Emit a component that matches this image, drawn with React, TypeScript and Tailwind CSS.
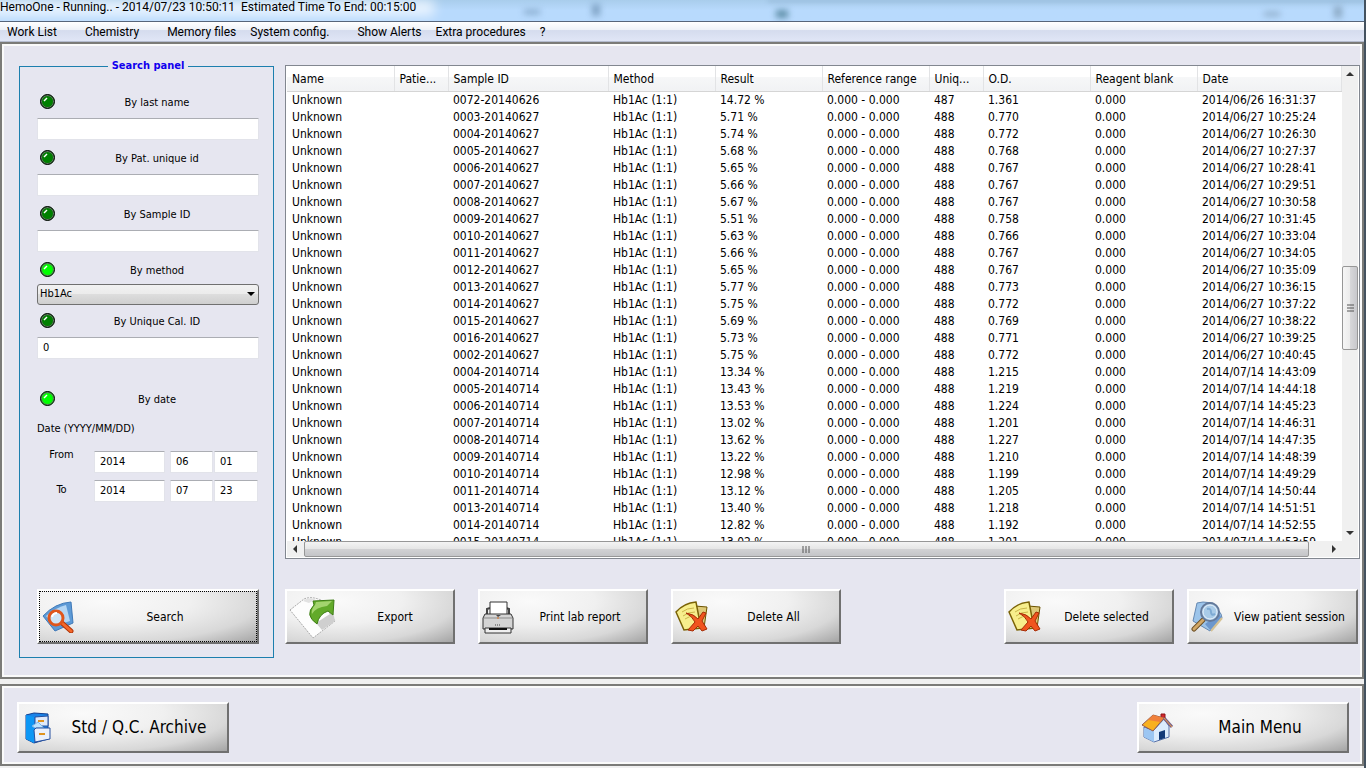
import React from "react";

interface Sample {
  id: string;
  result: string;
  cal: string;
  od: string;
  date: string;
}

const samples: Sample[] = [
  { id: "0072-20140626", result: "14.72 %", cal: "487", od: "1.361", date: "2014/06/26 16:31:37" },
  { id: "0003-20140627", result: "5.71 %", cal: "488", od: "0.770", date: "2014/06/27 10:25:24" },
  { id: "0004-20140627", result: "5.74 %", cal: "488", od: "0.772", date: "2014/06/27 10:26:30" },
  { id: "0005-20140627", result: "5.68 %", cal: "488", od: "0.768", date: "2014/06/27 10:27:37" },
  { id: "0006-20140627", result: "5.65 %", cal: "488", od: "0.767", date: "2014/06/27 10:28:41" },
  { id: "0007-20140627", result: "5.66 %", cal: "488", od: "0.767", date: "2014/06/27 10:29:51" },
  { id: "0008-20140627", result: "5.67 %", cal: "488", od: "0.767", date: "2014/06/27 10:30:58" },
  { id: "0009-20140627", result: "5.51 %", cal: "488", od: "0.758", date: "2014/06/27 10:31:45" },
  { id: "0010-20140627", result: "5.63 %", cal: "488", od: "0.766", date: "2014/06/27 10:33:04" },
  { id: "0011-20140627", result: "5.66 %", cal: "488", od: "0.767", date: "2014/06/27 10:34:05" },
  { id: "0012-20140627", result: "5.65 %", cal: "488", od: "0.767", date: "2014/06/27 10:35:09" },
  { id: "0013-20140627", result: "5.77 %", cal: "488", od: "0.773", date: "2014/06/27 10:36:15" },
  { id: "0014-20140627", result: "5.75 %", cal: "488", od: "0.772", date: "2014/06/27 10:37:22" },
  { id: "0015-20140627", result: "5.69 %", cal: "488", od: "0.769", date: "2014/06/27 10:38:22" },
  { id: "0016-20140627", result: "5.73 %", cal: "488", od: "0.771", date: "2014/06/27 10:39:25" },
  { id: "0002-20140627", result: "5.75 %", cal: "488", od: "0.772", date: "2014/06/27 10:40:45" },
  { id: "0004-20140714", result: "13.34 %", cal: "488", od: "1.215", date: "2014/07/14 14:43:09" },
  { id: "0005-20140714", result: "13.43 %", cal: "488", od: "1.219", date: "2014/07/14 14:44:18" },
  { id: "0006-20140714", result: "13.53 %", cal: "488", od: "1.224", date: "2014/07/14 14:45:23" },
  { id: "0007-20140714", result: "13.02 %", cal: "488", od: "1.201", date: "2014/07/14 14:46:31" },
  { id: "0008-20140714", result: "13.62 %", cal: "488", od: "1.227", date: "2014/07/14 14:47:35" },
  { id: "0009-20140714", result: "13.22 %", cal: "488", od: "1.210", date: "2014/07/14 14:48:39" },
  { id: "0010-20140714", result: "12.98 %", cal: "488", od: "1.199", date: "2014/07/14 14:49:29" },
  { id: "0011-20140714", result: "13.12 %", cal: "488", od: "1.205", date: "2014/07/14 14:50:44" },
  { id: "0013-20140714", result: "13.40 %", cal: "488", od: "1.218", date: "2014/07/14 14:51:51" },
  { id: "0014-20140714", result: "12.82 %", cal: "488", od: "1.192", date: "2014/07/14 14:52:55" },
  { id: "0015-20140714", result: "13.02 %", cal: "488", od: "1.201", date: "2014/07/14 14:53:59" },
];

const columns = [
  { title: "Name", width: "w-[107px]" },
  { title: "Patie...", width: "w-[54px]" },
  { title: "Sample ID", width: "w-[160px]" },
  { title: "Method", width: "w-[107px]" },
  { title: "Result", width: "w-[107px]" },
  { title: "Reference range", width: "w-[107px]" },
  { title: "Uniq...", width: "w-[54px]" },
  { title: "O.D.", width: "w-[107px]" },
  { title: "Reagent blank", width: "w-[107px]" },
  { title: "Date", width: "" },
];

const SearchIcon = () => (
  <svg width="32" height="32" viewBox="0 0 32 32">
    <path d="M1 15 Q13 2 29 1 L31 22 L13 30 Z" fill="#5d9ad6" stroke="#3f79b8" />
    <path d="M4 15 Q15 6 24 4 L28 20 L13 25 Z" fill="#b4d6f4" />
    <path d="M20 22 L29 30" stroke="#b03408" strokeWidth="5" strokeLinecap="round" />
    <path d="M20 22 L29 30" stroke="#f4682a" strokeWidth="3" strokeLinecap="round" />
    <circle cx="14" cy="17" r="7" fill="#cfe4f5" stroke="#e0561c" strokeWidth="3" />
    <path d="M10 16 Q11 12 15 12" stroke="#fff" strokeWidth="2" fill="none" />
  </svg>
);

const ExportIcon = () => (
  <svg width="48" height="44" viewBox="0 0 48 44">
    <path d="M1 15 L15 4 Q22 1 32 5 L46 26 L24 43 Z" fill="#fdfdfd" stroke="#aaa" strokeDasharray="2 1" />
    <path d="M27 28 L44 17 L46 26 L33 35 Z" fill="#cfcfcf" />
    <path d="M14 6 Q18 2 27 4 L20 8 Z" fill="#e2e2e2" />
    <path d="M28 29 Q15 20 25 10 L24 6 L45 5 L44 20 L39 16 Q30 19 28 29 Z" fill="#62aa2a" stroke="#3e7d16" />
    <path d="M26 10 L27 7 L43 6 L38 11 Q27 12 23 19 Q22 14 26 10 Z" fill="#a3d46e" />
  </svg>
);

const PrinterIcon = () => (
  <svg width="32" height="34" viewBox="0 0 32 34">
    <path d="M5 15 V9 L8 8 M27 15 V9 L24 8" stroke="#444" fill="none" strokeWidth="2" />
    <path d="M8 15 V2 H25 V15 Z" fill="#fff" stroke="#333" />
    <path d="M3 14 H29 L31 18 V29 H1 V18 Z" fill="#d4d4d4" stroke="#333" />
    <path d="M2 18 H30" stroke="#8b8b8b" />
    <path d="M3 28 H29 V33 H3 Z" fill="#efefef" stroke="#333" />
    <path d="M7 29 H25" stroke="#111" strokeWidth="2" />
    <path d="M13 25 H19" stroke="#444" strokeDasharray="1 1" />
    <path d="M14 15 H19 L16 17 Z" fill="#444" />
    <path d="M16 17 V19" stroke="#e07020" />
  </svg>
);

const DeleteIcon = () => (
  <svg width="33" height="31" viewBox="0 0 33 31">
    <path d="M20 5 L32 6 L29 27 L18 24 Z" fill="#dcc878" stroke="#6b5200" />
    <path d="M1 11 Q9 2 21 1 L26 27 L9 29 Z" fill="#f7ee8c" stroke="#7a6206" strokeWidth="1.5" />
    <path d="M7 11 Q12 7 19 7 M8 15 Q13 11 20 11 M10 18 Q14 15 20 15" stroke="#c9b64a" fill="none" />
    <path d="M11 12 Q19 13 23 18 L28 11 L31 12 L27 20 L32 28 L27 30 L23 25 L18 30 L13 29 L20 21 Q17 15 11 12 Z" fill="#f0541e" stroke="#a62c05" />
  </svg>
);

const ViewIcon = () => (
  <svg width="32" height="32" viewBox="0 0 32 32">
    <path d="M6 2 L12 1 L22 2 L30 13 L31 17 L19 30 L2 20 Z" fill="#9cc4ea" stroke="#6488b2" />
    <path d="M14 23 L28 13 L31 17 L20 30 Z" fill="#6c97cd" />
    <path d="M20 30 L31 17" stroke="#d5c295" strokeWidth="2" />
    <path d="M12 19 L3 28" stroke="#6e5126" strokeWidth="5" strokeLinecap="round" />
    <path d="M12 19 L3 28" stroke="#d2a868" strokeWidth="3" strokeLinecap="round" />
    <circle cx="19" cy="11" r="9" fill="#a9cbe8" stroke="#64799a" strokeWidth="2" />
    <circle cx="19" cy="11" r="7" fill="none" stroke="#e8f1fa" />
    <path d="M16 8 Q20 7 20 11 T24 13" stroke="#7eaad3" strokeWidth="2" fill="none" />
  </svg>
);

const CabinetIcon = () => (
  <svg width="26" height="32" viewBox="0 0 26 32">
    <path d="M1 3 L9 1 L23 2 V27 L9 31 L1 27 Z" fill="#1b83e8" stroke="#123f8f" />
    <path d="M1 3 L9 5 V31 L1 27 Z" fill="#0d97f5" />
    <path d="M10 5 L23 4 V14 H10 Z" fill="#dfe9fa" stroke="#27509f" />
    <path d="M13 9 H19" stroke="#df9320" strokeWidth="2" />
    <path d="M7 14 L13 10 L19 16 H10 Z" fill="#bfe4ff" stroke="#7eb4e6" />
    <path d="M9 18 L11 16 H25 V27 L10 30 Z" fill="#eaf0fc" stroke="#27509f" />
    <path d="M14 22 H20" stroke="#df9320" strokeWidth="2" />
  </svg>
);

const HouseIcon = () => (
  <svg width="32" height="30" viewBox="0 0 32 30">
    <path d="M20 1 H24 V9 H20 Z" fill="#d3262b" stroke="#8d1418" />
    <path d="M3 14 L12 18 L23 6 L28 13 V24 L13 29 L3 24 Z" fill="#dbebfc" stroke="#5670a8" />
    <path d="M3 15 L13 18 V29 L3 24 Z" fill="#9cc6f2" />
    <path d="M1 12 L12 2 L23 5 L12 18 Z" fill="#f8b020" stroke="#965b4c" />
    <path d="M12 2 L23 5 L19 9 L7 7 Z" fill="#f0803a" />
    <path d="M23 5 L31 14" stroke="#77608a" strokeWidth="3" />
    <path d="M23 5 L31 14" stroke="#f0a040" />
    <path d="M18 19 L24 17 V25 L18 27 Z" fill="#123a78" />
  </svg>
);

interface PushButtonProps {
  icon: React.ReactNode;
  label: string;
  size: string;
  focused?: boolean;
}

const PushButton: React.FC<PushButtonProps> = ({ icon, label, size, focused }) => (
  <button
    className={`flex shrink-0 items-center border-2 border-t-white border-l-white border-r-[#707070] border-b-[#707070] bg-[radial-gradient(ellipse_at_30%_20%,#fafafa_0%,#f0f0f0_40%,#d8d8d8_72%,#a4a4a4_100%)] ${size}`}
  >
    <span className={`flex h-full w-full items-center pl-0.5 ${focused ? "border border-dotted border-black" : ""}`}>
      {icon}
      <span className="flex-1 text-center whitespace-nowrap">{label}</span>
    </span>
  </button>
);

const Led: React.FC<{ id: string; on?: boolean }> = ({ id, on }) => (
  <span className="relative size-[15px] shrink-0">
    <input
      id={id}
      type="checkbox"
      defaultChecked={on}
      className="block size-[15px] appearance-none rounded-full border border-black bg-[#008000] shadow-[inset_0_0_0_1px_#6b6b6b] checked:bg-[#00ff00]"
    />
    <svg className="pointer-events-none absolute top-0 left-0" width="15" height="15" viewBox="0 0 15 15">
      <path d="M4 7 L7 4" stroke="#fff" strokeWidth="1.5" />
    </svg>
  </span>
);

const FilterHead: React.FC<{ id: string; label: string; on?: boolean }> = ({ id, label, on }) => (
  <div className="flex h-4 items-start pl-[3px]">
    <Led id={id} on={on} />
    <label htmlFor={id} className="flex-1 text-center leading-[18px]">{label}</label>
  </div>
);

const TextBox: React.FC<{ label: string; value?: string; width: string }> = ({ label, value = "", width }) => (
  <input
    type="text"
    aria-label={label}
    defaultValue={value}
    className={`h-[22px] min-w-0 rounded-[1px] border border-[#e2e3ea] border-t-[#abadb3] bg-white px-[5px] pb-0.5 ${width}`}
  />
);

const DateBoxes: React.FC<{ label: string; y: string; m: string; d: string }> = ({ label, y, m, d }) => (
  <div className="flex">
    <TextBox label={`${label} year`} value={y} width="w-[71px]" />
    <span className="ml-[5px] flex gap-px">
      <TextBox label={`${label} month`} value={m} width="w-[43px]" />
      <TextBox label={`${label} day`} value={d} width="w-[44px]" />
    </span>
  </div>
);

const Arrow: React.FC<{ points: string; label: string }> = ({ points, label }) => (
  <button aria-label={label} className="flex size-[17px] shrink-0 items-center justify-center">
    <svg width="9" height="9" viewBox="0 0 9 9"><polygon points={points} fill="#333" /></svg>
  </button>
);

const panel =
  "border-2 border-[#7b7b78] bg-[#e6e6f0] shadow-[inset_0_0_0_2px_#fafafa]";

const App: React.FC = () => {
  return (
    <div className="flex h-screen min-h-[700px] flex-col overflow-hidden border-r-2 border-[#44525f] bg-[#f0f0f0] font-['DejaVu_Sans_Condensed','Noto_Sans',sans-serif] text-[11px] text-black">
      <header className="relative h-[21px] shrink-0 overflow-hidden bg-linear-to-b from-[#a9cdec] via-[#b8dafd] to-[#b8dafd] font-[Roboto,sans-serif] text-[12px]">
        <div className="absolute top-0 -left-4 h-4 w-[450px] bg-white/70 blur-[6px]" />
        <div className="absolute top-2.5 left-[524px] h-1 w-4 bg-[#7fa3c4] blur-[3px]" />
        <div className="absolute top-1 left-[592px] h-3 w-2 bg-[#7fa3c4] blur-[3px]" />
        <div className="absolute top-2.5 left-[776px] h-2 w-3 bg-[#5f8fa8] blur-[3px]" />
        <div className="absolute top-0 left-[768px] h-0.5 w-[600px] bg-[#8fb3d2] blur-[2px]" />
        <div className="absolute top-3 right-[84px] h-1 w-4 bg-[#8ba9c4] blur-[3px]" />
        <div className="absolute top-1.5 right-[22px] h-3 w-2 bg-[#8ba9c4] blur-[3px]" />
        <h1 className="relative leading-[14px] whitespace-pre">HemoOne - Running.. - 2014/07/23 10:50:11  Estimated Time To End: 00:15:00</h1>
      </header>

      <nav className="flex h-[21px] shrink-0 items-center border-t border-b border-t-[#56657a] border-b-[#b5bccf] bg-[linear-gradient(#ffffff_0%,#eef2f8_40%,#d5dcee_45%,#e0e6f6_100%)] pl-[7px] font-[Roboto,sans-serif] text-[12px]">
        <button className="mr-7">Work List</button>
        <button className="mr-7">Chemistry</button>
        <button className="mr-3.5">Memory files</button>
        <button className="mr-7">System config.</button>
        <button className="mr-3.5">Show Alerts</button>
        <button className="mr-3.5">Extra procedures</button>
        <button>?</button>
      </nav>

      <main className={`flex min-h-0 flex-1 gap-[11px] pt-[14px] pr-0.5 pb-[19px] pl-[17px] ${panel}`}>
        <fieldset className="flex w-[255px] shrink-0 flex-col border border-[#1c7fae] pr-[14px] pb-[13px] pl-[17px]">
          <legend className="mx-auto px-1 text-[11px] leading-4 font-bold text-[#1100ee]">Search panel</legend>

          <div className="mt-5 mb-2.5 flex flex-col gap-2">
            <FilterHead id="f-name" label="By last name" />
            <TextBox label="Last name" width="w-full" />
          </div>
          <div className="mb-2.5 flex flex-col gap-2">
            <FilterHead id="f-pat" label="By Pat. unique id" />
            <TextBox label="Patient unique id" width="w-full" />
          </div>
          <div className="mb-2.5 flex flex-col gap-2">
            <FilterHead id="f-sample" label="By Sample ID" />
            <TextBox label="Sample ID" width="w-full" />
          </div>
          <div className="mb-2 flex flex-col gap-1.5">
            <FilterHead id="f-method" label="By method" on />
            <div className="relative">
              <select
                aria-label="Method"
                className="block h-[21px] w-full appearance-none rounded-[3px] border border-[#707070] bg-[linear-gradient(#f2f2f2_0%,#ebebeb_49%,#dddddd_50%,#cfcfcf_100%)] pl-0.5"
              >
                <option>Hb1Ac</option>
              </select>
              <svg className="pointer-events-none absolute top-2 right-1" width="8" height="5" viewBox="0 0 8 5">
                <polygon points="0,0 8,0 4,4" fill="#000" />
              </svg>
            </div>
          </div>
          <div className="mb-8 flex flex-col gap-2">
            <FilterHead id="f-cal" label="By Unique Cal. ID" />
            <TextBox label="Unique calibration ID" value="0" width="w-full" />
          </div>
          <FilterHead id="f-date" label="By date" on />
          <p className="mt-3.5 leading-4">Date (YYYY/MM/DD)</p>
          <div className="mt-2.5 flex">
            <div className="flex w-[57px] flex-col gap-[19px] pr-2 text-center leading-4">
              <span>From</span>
              <span>To</span>
            </div>
            <div className="flex flex-col gap-[7px] pt-1">
              <DateBoxes label="From" y="2014" m="06" d="01" />
              <DateBoxes label="To" y="2014" m="07" d="23" />
            </div>
          </div>
          <div className="mt-auto flex flex-col text-[12px]">
            <PushButton icon={<SearchIcon />} label="Search" size="h-[55px] w-full" focused />
          </div>
        </fieldset>

        <section className="flex min-w-0 flex-1 flex-col pt-[7px] pb-[14px]">
          <div className="flex min-h-0 flex-1 border border-[#828790] bg-white p-px pt-0">
            <div className="flex min-w-0 flex-1 flex-col">
              <div className="min-h-0 flex-1 overflow-hidden">
                <table className="w-full table-fixed border-collapse text-[12px]">
                  <thead>
                    <tr className="h-[25px] bg-[linear-gradient(#ffffff_0%,#ffffff_45%,#f6f7f8_46%,#f1f2f4_100%)]">
                      {columns.map((c) => (
                        <th key={c.title} className={`border-r border-b border-r-[#e2e3e5] border-b-[#d5d5d5] p-0 pt-0.5 pl-[5px] text-left font-normal whitespace-nowrap ${c.width}`}>
                          {c.title}
                        </th>
                      ))}
                    </tr>
                  </thead>
                  <tbody className="leading-[17px] [&_td]:p-0 [&_td]:pl-[5px] [&_td]:whitespace-nowrap">
                    {samples.map((s) => (
                      <tr key={s.date}>
                        <td>Unknown</td>
                        <td></td>
                        <td>{s.id}</td>
                        <td>Hb1Ac (1:1)</td>
                        <td>{s.result}</td>
                        <td>0.000 - 0.000</td>
                        <td>{s.cal}</td>
                        <td>{s.od}</td>
                        <td>0.000</td>
                        <td>{s.date}</td>
                      </tr>
                    ))}
                  </tbody>
                </table>
              </div>
              <div className="flex h-4 shrink-0 items-center bg-[#f0f0f0]">
                <Arrow label="Scroll left" points="6,0 6,8 2,4" />
                <div className="flex h-4 flex-1 items-center justify-center rounded-[2px] border border-[#979797] bg-[linear-gradient(#f4f4f4_0%,#e6e6e6_48%,#d2d2d4_50%,#c4c5c8_100%)]">
                  <svg width="9" height="7" viewBox="0 0 9 7"><path d="M1 0V7M4 0V7M7 0V7" stroke="#555" /></svg>
                </div>
                <div className="w-4" />
                <Arrow label="Scroll right" points="3,0 3,8 7,4" />
              </div>
            </div>
            <div className="flex w-4 shrink-0 flex-col items-center bg-[#f0f0f0]">
              <Arrow label="Scroll up" points="0,6 8,6 4,2" />
              <div className="flex-[184]" />
              <div className="flex h-[84px] w-4 items-center justify-center rounded-[2px] border border-[#979797] bg-[linear-gradient(90deg,#f6f6f6_0%,#ececec_48%,#d8d8da_50%,#c8c8cc_100%)]">
                <svg width="7" height="9" viewBox="0 0 7 9"><path d="M0 1H7M0 4H7M0 7H7" stroke="#555" /></svg>
              </div>
              <div className="flex-[174]" />
              <Arrow label="Scroll down" points="0,3 8,3 4,7" />
              <div className="h-4" />
            </div>
          </div>

          <div className="mt-[30px] flex shrink-0 justify-between pr-0.5 text-[12px]">
            <div className="flex gap-[23px]">
              <PushButton icon={<ExportIcon />} label="Export" size="h-[55px] w-[170px]" />
              <PushButton icon={<PrinterIcon />} label="Print lab report" size="h-[55px] w-[170px]" />
              <PushButton icon={<DeleteIcon />} label="Delete All" size="h-[55px] w-[170px]" />
            </div>
            <div className="flex gap-[13px]">
              <PushButton icon={<DeleteIcon />} label="Delete selected" size="h-[55px] w-[170px]" />
              <PushButton icon={<ViewIcon />} label="View patient session" size="h-[55px] w-[171px]" />
            </div>
          </div>
        </section>
      </main>

      <footer className={`mt-[5px] mb-0.5 flex h-[82px] shrink-0 items-start justify-between pt-4 pr-[13px] pl-[15px] text-[17px] ${panel}`}>
        <PushButton icon={<span className="pl-1"><CabinetIcon /></span>} label="Std / Q.C. Archive" size="h-[51px] w-[212px]" />
        <PushButton icon={<HouseIcon />} label="Main Menu" size="h-[51px] w-[212px]" />
      </footer>
    </div>
  );
};

export default App;
